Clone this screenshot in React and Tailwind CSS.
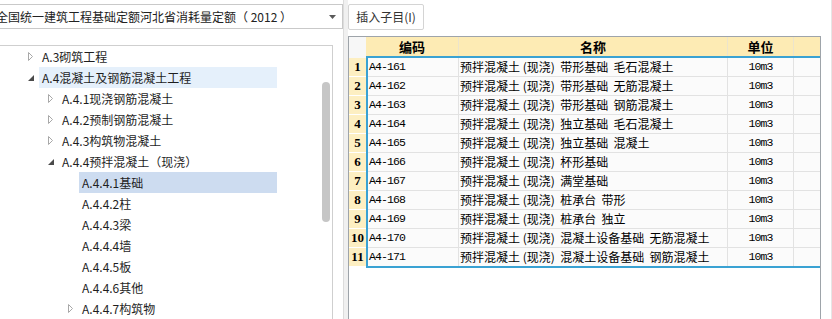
import React from "react";

const treeItems = [
  { label: "A.3砌筑工程", level: 0, arrow: "closed" },
  { label: "A.4混凝土及钢筋混凝土工程", level: 0, arrow: "open", hover: true },
  { label: "A.4.1现浇钢筋混凝土", level: 1, arrow: "closed" },
  { label: "A.4.2预制钢筋混凝土", level: 1, arrow: "closed" },
  { label: "A.4.3构筑物混凝土", level: 1, arrow: "closed" },
  { label: "A.4.4预拌混凝土（现浇）", level: 1, arrow: "open" },
  { label: "A.4.4.1基础", level: 2, selected: true },
  { label: "A.4.4.2柱", level: 2 },
  { label: "A.4.4.3梁", level: 2 },
  { label: "A.4.4.4墙", level: 2 },
  { label: "A.4.4.5板", level: 2 },
  { label: "A.4.4.6其他", level: 2 },
  { label: "A.4.4.7构筑物", level: 2, arrow: "closed" },
];

const indentClass = ["pl-[23px]", "pl-[43px]", "pl-[63px]"];

const rows = [
  ["A4-161", "预拌混凝土 (现浇)  带形基础  毛石混凝土"],
  ["A4-162", "预拌混凝土 (现浇)  带形基础  无筋混凝土"],
  ["A4-163", "预拌混凝土 (现浇)  带形基础  钢筋混凝土"],
  ["A4-164", "预拌混凝土 (现浇)  独立基础  毛石混凝土"],
  ["A4-165", "预拌混凝土 (现浇)  独立基础  混凝土"],
  ["A4-166", "预拌混凝土 (现浇)  杯形基础"],
  ["A4-167", "预拌混凝土 (现浇)  满堂基础"],
  ["A4-168", "预拌混凝土 (现浇)  桩承台  带形"],
  ["A4-169", "预拌混凝土 (现浇)  桩承台  独立"],
  ["A4-170", "预拌混凝土 (现浇)  混凝土设备基础  无筋混凝土"],
  ["A4-171", "预拌混凝土 (现浇)  混凝土设备基础  钢筋混凝土"],
];

const cjk = "font-['Noto_Sans_CJK_SC','Noto_Sans',sans-serif]";
const mono = "font-['Liberation_Mono','DejaVu_Sans_Mono',monospace]";

// tree expand / collapse glyphs
const Arrow = ({ type }) => {
  if (type === "closed") {
    return (
      <svg width="6" height="9" viewBox="0 0 6 9">
        <path d="M0.5 0.5 L4.5 4.5 L0.5 8.5 Z" fill="#fff" stroke="#a8a8a8" />
      </svg>
    );
  }
  if (type === "open") {
    return (
      <svg width="6" height="6" viewBox="0 0 6 6">
        <path d="M6 0 L6 6 L0 6 Z" fill="#4a4a4a" />
      </svg>
    );
  }
  return null;
};

const TreeRow = ({ item }) => (
  <div className={`flex h-[21px] w-[277px] items-center ${indentClass[item.level]}`}>
    <span className="flex w-[16px] items-center justify-center">
      <Arrow type={item.arrow} />
    </span>
    <span
      className={`flex h-full flex-1 items-center pl-[3px] text-[12px] text-[#1e1e1e] ${
        item.selected ? "bg-[#cddcf0]" : item.hover ? "bg-[#e5f0fb]" : ""
      }`}
    >
      {item.label}
    </span>
  </div>
);

export default function App() {
  return (
    <div className={`flex h-[319px] w-[832px] overflow-hidden bg-white ${cjk}`}>
      {/* left side: quota selector + chapter tree */}
      <div className="flex w-[343px] flex-col">
        <div className="mt-[4px] flex h-[25px] w-[343px] items-center overflow-hidden border-y border-r border-[#c9c9c9] bg-white">
          <span className="ml-[-4px] flex-1 whitespace-pre text-[12px] text-[#222]">
            全国统一建筑工程基础定额河北省消耗量定额（ 2012 ）
          </span>
          <svg width="7" height="4" viewBox="0 0 7 4" className="mr-[6px] shrink-0">
            <path d="M0 0 L7 0 L3.5 4 Z" fill="#5a5a5a" />
          </svg>
        </div>
        <div className="mt-[16px] flex w-[333px] flex-1 border-t border-r border-[#cfcfcf]">
          <div className="w-[322px]">
            {treeItems.map((item) => (
              <TreeRow key={item.label} item={item} />
            ))}
          </div>
          <div className="w-[8px]">
            <div className="mt-[36px] h-[140px] rounded-full bg-[#c6c6c6]" />
          </div>
        </div>
      </div>

      {/* splitter */}
      <div className="w-[5px] border-l border-[#dcdcdc] bg-[#f0f0f0]" />

      {/* right side: item list */}
      <div className="flex w-[473px] flex-col">
        <button className="mt-[4px] h-[26px] w-[76px] rounded-[2px] border border-[#d4d4d4] bg-white text-[12px] text-[#333]">
          插入子目(I)
        </button>
        <div className="mt-[6px] flex flex-1 border-x border-t border-[#9ea4aa]">
          {/* row numbers */}
          <div className="w-[17px]">
            <div className="h-[21px] bg-[#f7f7f7]" />
            {rows.map((r, i) => (
              <div
                key={r[0]}
                className={`flex items-center justify-center bg-[#fdefc2] font-['Liberation_Serif',serif] text-[13px] font-bold text-black ${
                  i === rows.length - 1 ? "h-[18px]" : "h-[19px] border-b border-white"
                }`}
              >
                {i + 1}
              </div>
            ))}
          </div>

          {/* data */}
          <div className="flex-1">
            <div className="flex h-[19px] bg-[#fdebb4] text-[13px] font-bold text-black">
              <div className="flex w-[93px] items-center justify-center border-r border-[#ece4cc]">编码</div>
              <div className="flex w-[269px] items-center justify-center border-r border-[#ece4cc]">名称</div>
              <div className="flex w-[66px] items-center justify-center border-r border-[#ece4cc]">单位</div>
              <div className="flex-1" />
            </div>
            <div className="border-y-2 border-l-2 border-[#3aa2d3]">
              {rows.map((r, i) => (
                <div
                  key={r[0]}
                  className={`flex bg-[#fbfbfb] text-[12px] text-black ${
                    i === rows.length - 1 ? "h-[18px]" : "h-[19px] border-b border-[#e2e2e2]"
                  }`}
                >
                  <div className={`flex w-[91px] items-center border-r border-[#e2e2e2] pl-[1px] ${mono} text-[11.5px] tracking-[-0.9px]`}>
                    {r[0]}
                  </div>
                  <div className="flex w-[269px] items-center whitespace-pre border-r border-[#e2e2e2] pl-[1px]">
                    {r[1]}
                  </div>
                  <div className={`flex w-[66px] items-center justify-center border-r border-[#e2e2e2] ${mono} text-[11.5px] tracking-[-0.9px]`}>
                    10m3
                  </div>
                  <div className="flex-1" />
                </div>
              ))}
            </div>
          </div>
        </div>
      </div>

      <div className="flex-1 border-r border-[#e6e6e6]" />
    </div>
  );
}
